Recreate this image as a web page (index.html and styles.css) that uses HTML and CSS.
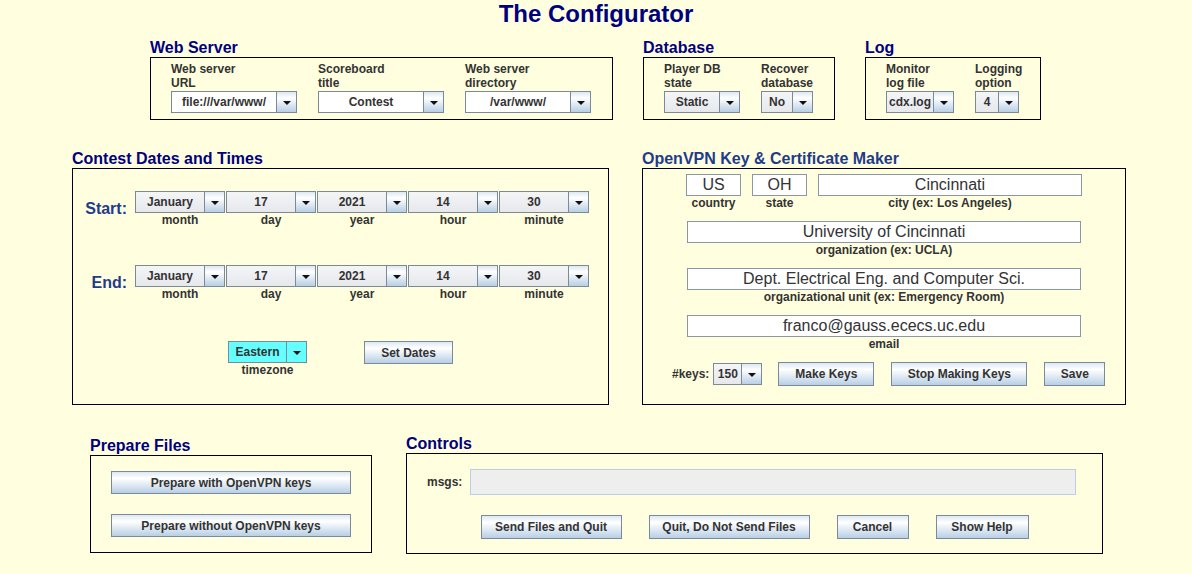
FILE: index.html
```html
<!DOCTYPE html>
<html>
<head>
<meta charset="utf-8">
<title>The Configurator</title>
<link rel="stylesheet" href="styles.css">
</head>
<body>
<h1 class="title">The Configurator</h1>

<div class="row row-top">
  <section class="group">
    <h2 class="group-title">Web Server</h2>
    <div class="panel panel-top w-web">
      <div class="field">
        <div class="lbl2">Web server<br>URL</div>
        <div class="combo editable c-web"><span class="val">file:///var/www/</span><span class="arr"></span></div>
      </div>
      <div class="field">
        <div class="lbl2">Scoreboard<br>title</div>
        <div class="combo editable c-web"><span class="val">Contest</span><span class="arr"></span></div>
      </div>
      <div class="field">
        <div class="lbl2">Web server<br>directory</div>
        <div class="combo editable c-web"><span class="val">/var/www/</span><span class="arr"></span></div>
      </div>
    </div>
  </section>
  <section class="group">
    <h2 class="group-title">Database</h2>
    <div class="panel panel-top w-db">
      <div class="field">
        <div class="lbl2">Player DB<br>state</div>
        <div class="combo c-static"><span class="val">Static</span><span class="arr"></span></div>
      </div>
      <div class="field">
        <div class="lbl2">Recover<br>database</div>
        <div class="combo c-no"><span class="val">No</span><span class="arr"></span></div>
      </div>
    </div>
  </section>
  <section class="group">
    <h2 class="group-title">Log</h2>
    <div class="panel panel-top w-log">
      <div class="field">
        <div class="lbl2">Monitor<br>log file</div>
        <div class="combo c-log"><span class="val">cdx.log</span><span class="arr"></span></div>
      </div>
      <div class="field">
        <div class="lbl2">Logging<br>option</div>
        <div class="combo c-opt"><span class="val">4</span><span class="arr"></span></div>
      </div>
    </div>
  </section>
</div>

<div class="row row-mid">
  <section class="group">
    <h2 class="group-title">Contest Dates and Times</h2>
    <div class="panel date-panel">
      <div class="date-row">
        <div class="when">Start:</div>
        <div class="date-fields">
          <div class="dcol"><div class="combo c-date"><span class="val">January</span><span class="arr"></span></div><div class="sub">month</div></div>
          <div class="dcol"><div class="combo c-date"><span class="val">17</span><span class="arr"></span></div><div class="sub">day</div></div>
          <div class="dcol"><div class="combo c-date"><span class="val">2021</span><span class="arr"></span></div><div class="sub">year</div></div>
          <div class="dcol"><div class="combo c-date"><span class="val">14</span><span class="arr"></span></div><div class="sub">hour</div></div>
          <div class="dcol"><div class="combo c-date"><span class="val">30</span><span class="arr"></span></div><div class="sub">minute</div></div>
        </div>
      </div>
      <div class="date-row">
        <div class="when">End:</div>
        <div class="date-fields">
          <div class="dcol"><div class="combo c-date"><span class="val">January</span><span class="arr"></span></div><div class="sub">month</div></div>
          <div class="dcol"><div class="combo c-date"><span class="val">17</span><span class="arr"></span></div><div class="sub">day</div></div>
          <div class="dcol"><div class="combo c-date"><span class="val">2021</span><span class="arr"></span></div><div class="sub">year</div></div>
          <div class="dcol"><div class="combo c-date"><span class="val">14</span><span class="arr"></span></div><div class="sub">hour</div></div>
          <div class="dcol"><div class="combo c-date"><span class="val">30</span><span class="arr"></span></div><div class="sub">minute</div></div>
        </div>
      </div>
      <div class="tz-row">
        <div class="dcol"><div class="combo cyan c-tz"><span class="val">Eastern</span><span class="arr"></span></div><div class="sub">timezone</div></div>
        <button class="btn b-setdates">Set Dates</button>
      </div>
    </div>
  </section>
  <section class="group">
    <h2 class="group-title alt">OpenVPN Key &amp; Certificate Maker</h2>
    <div class="panel vpn-panel">
      <div class="vrow">
        <div class="vgroup"><div class="tf tf-short">US</div><div class="sub">country</div></div>
        <div class="vgroup"><div class="tf tf-short">OH</div><div class="sub">state</div></div>
        <div class="vgroup"><div class="tf tf-city">Cincinnati</div><div class="sub">city (ex: Los Angeles)</div></div>
      </div>
      <div class="vgroup"><div class="tf tf-wide">University of Cincinnati</div><div class="sub">organization (ex: UCLA)</div></div>
      <div class="vgroup"><div class="tf tf-wide">Dept. Electrical Eng. and Computer Sci.</div><div class="sub">organizational unit (ex: Emergency Room)</div></div>
      <div class="vgroup"><div class="tf tf-wide">franco@gauss.ececs.uc.edu</div><div class="sub">email</div></div>
      <div class="keys-row">
        <span class="keys-lbl">#keys:</span>
        <div class="combo c-keys"><span class="val">150</span><span class="arr"></span></div>
        <button class="btn b-tall b-make">Make Keys</button>
        <button class="btn b-tall b-stop">Stop Making Keys</button>
        <button class="btn b-tall b-save">Save</button>
      </div>
    </div>
  </section>
</div>

<div class="row row-bottom">
  <section class="group prep-group">
    <h2 class="group-title">Prepare Files</h2>
    <div class="panel prep-panel">
      <button class="btn b-prep">Prepare with OpenVPN keys</button>
      <button class="btn b-prep">Prepare without OpenVPN keys</button>
    </div>
  </section>
  <section class="group">
    <h2 class="group-title">Controls</h2>
    <div class="panel ctrl-panel">
      <div class="msgs-row">
        <span class="msgs-lbl">msgs:</span>
        <div class="msgs-field"></div>
      </div>
      <div class="ctrl-buttons">
        <button class="btn b-tall b-send">Send Files and Quit</button>
        <button class="btn b-tall b-quit">Quit, Do Not Send Files</button>
        <button class="btn b-tall b-cancel">Cancel</button>
        <button class="btn b-tall b-help">Show Help</button>
      </div>
    </div>
  </section>
</div>
</body>
</html>
```

FILE: styles.css
```css
* { box-sizing: border-box; }

body {
  margin: 0;
  width: 1192px;
  height: 574px;
  overflow: hidden;
  background: #ffffe0;
  font-family: "Liberation Sans", Arial, sans-serif;
  color: #333;
}

.title {
  margin: 0;
  font-size: 24px;
  line-height: 28px;
  font-weight: bold;
  color: #00007f;
  text-align: center;
}

.row { display: flex; align-items: flex-start; }
.row-top { margin-top: 11px; padding-left: 150px; gap: 30px; }
.row-mid { margin-top: 30px; padding-left: 72px; gap: 33px; }
.row-bottom { margin-top: 30px; padding-left: 90px; gap: 34px; }

.group-title {
  margin: 0;
  font-size: 16px;
  line-height: 18px;
  font-weight: bold;
  color: #00007f;
  white-space: nowrap;
}
.group-title.alt { color: #1f3c8a; }

.panel { border: 1px solid #000; }

/* top row panels */
.panel-top { display: flex; gap: 21px; padding: 4px 20px 6px 20px; }
.w-web { width: 463px; }
.w-db { width: 192px; }
.w-log { width: 176px; }

.field { display: flex; flex-direction: column; }
.lbl2 {
  font-size: 12px;
  line-height: 14px;
  font-weight: bold;
  height: 28px;
  margin-bottom: 1px;
  white-space: nowrap;
}

/* combo boxes */
.combo {
  display: flex;
  height: 22px;
  border: 1px solid #7a8a99;
  font-size: 12px;
  font-weight: bold;
  color: #333;
}
.combo .val {
  flex: 1;
  min-width: 0;
  display: flex;
  align-items: center;
  justify-content: center;
  background: linear-gradient(#f4f5f7, #e6e8ec);
  white-space: nowrap;
  overflow: hidden;
}
.combo.editable .val { background: #fff; }
.combo .arr {
  width: 20px;
  flex: none;
  border-left: 1px solid #7a8a99;
  background: linear-gradient(#dde8f3, #ffffff 30%, #b8cfe5);
  display: flex;
  align-items: center;
  justify-content: center;
}
.combo .arr::after {
  content: "";
  border-left: 4px solid transparent;
  border-right: 4px solid transparent;
  border-top: 4px solid #111;
  margin-top: 1px;
}
.combo.cyan .val, .combo.cyan .arr { background: #66ffff; }

.c-web { width: 126px; }
.c-static { width: 76px; }
.c-no { width: 52px; }
.c-log { width: 68px; }
.c-opt { width: 44px; }
.c-date { width: 90px; }
.c-tz { width: 79px; }
.c-keys { width: 49px; }

/* dates panel */
.date-panel { width: 537px; height: 237px; padding: 22px 0 0 12px; }
.date-row { display: flex; align-items: center; }
.date-row + .date-row { margin-top: 38px; }
.when {
  width: 42px;
  margin-right: 8px;
  text-align: right;
  font-size: 16px;
  line-height: 18px;
  font-weight: bold;
  color: #1f3c8a;
}
.date-fields { display: flex; gap: 1px; }
.dcol { display: flex; flex-direction: column; }
.sub {
  font-size: 12px;
  line-height: 14px;
  font-weight: bold;
  text-align: center;
  white-space: nowrap;
}
.tz-row { display: flex; align-items: flex-start; margin-top: 40px; padding-left: 143px; gap: 57px; }

/* buttons */
.btn {
  margin: 0;
  padding: 0;
  height: 23px;
  border: 1px solid #7a8a99;
  border-radius: 0;
  background: linear-gradient(#dde8f3, #ffffff 30%, #b8cfe5);
  font-family: "Liberation Sans", Arial, sans-serif;
  font-size: 12px;
  font-weight: bold;
  color: #333;
  white-space: nowrap;
}
.b-tall { height: 24px; }
.b-setdates { width: 89px; }
.b-make { width: 96px; margin-left: 16px; }
.b-stop { width: 136px; margin-left: 17px; }
.b-save { width: 61px; margin-left: 17px; }
.b-prep { width: 240px; }
.b-send { width: 141px; }
.b-quit { width: 161px; }
.b-cancel { width: 72px; }
.b-help { width: 93px; }

/* openvpn panel */
.vpn-panel {
  width: 484px;
  height: 237px;
  display: flex;
  flex-direction: column;
  align-items: center;
  padding-top: 5px;
}
.vrow { display: flex; gap: 11px; }
.vgroup { display: flex; flex-direction: column; align-items: center; }
.vpn-panel > .vgroup { margin-top: 11px; }
.tf {
  height: 22px;
  border: 1px solid #8a97a5;
  background: #fff;
  font-size: 16px;
  color: #333;
  display: flex;
  align-items: center;
  justify-content: center;
  white-space: nowrap;
}
.tf-short { width: 55px; }
.tf-city { width: 264px; }
.tf-wide { width: 394px; }
.keys-row {
  align-self: flex-start;
  margin: 11px 0 0 29px;
  display: flex;
  align-items: center;
}
.keys-lbl { font-size: 12px; font-weight: bold; margin-right: 4px; }

/* prepare */
.prep-group { margin-top: 2px; }
.prep-panel {
  width: 282px;
  height: 98px;
  padding: 15px 20px;
  display: flex;
  flex-direction: column;
  gap: 20px;
}

/* controls */
.ctrl-panel { width: 697px; height: 101px; padding: 15px 20px 0 20px; }
.msgs-row { display: flex; align-items: center; margin-right: 6px; }
.msgs-lbl { font-size: 12px; font-weight: bold; margin-right: 8px; }
.msgs-field { flex: 1; height: 26px; background: #eeeeee; border: 1px solid #b8cfe5; }
.ctrl-buttons { display: flex; justify-content: center; gap: 27px; margin-top: 20px; }
```
